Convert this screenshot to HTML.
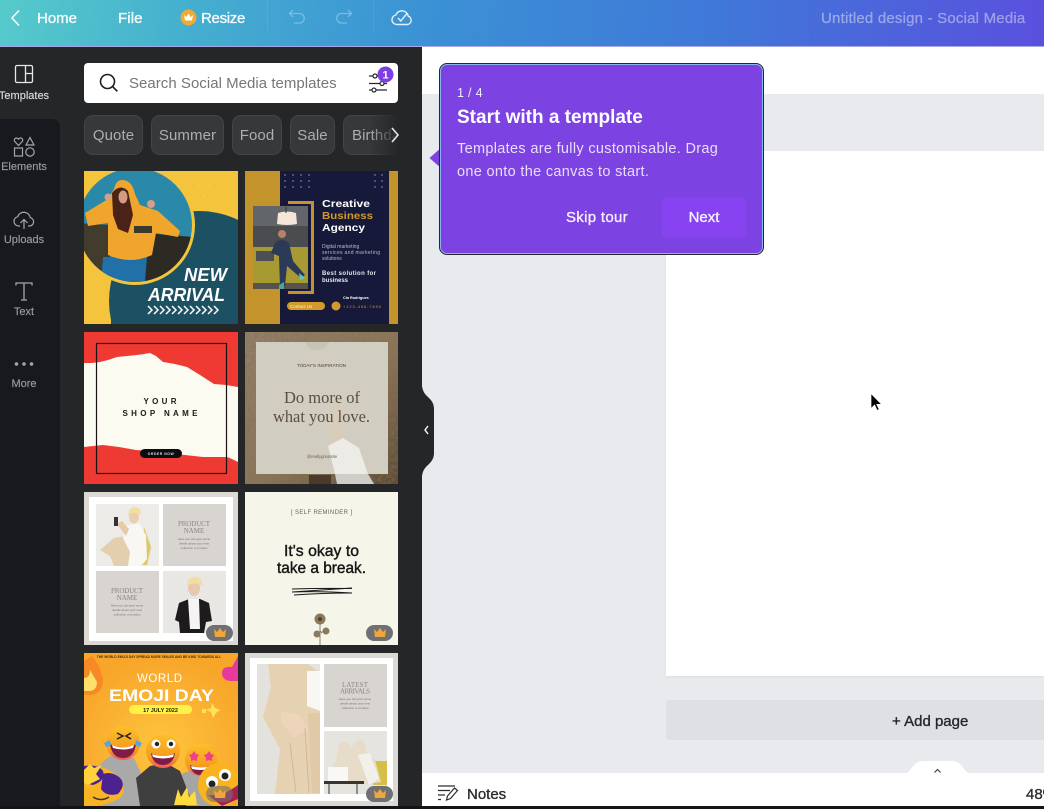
<!DOCTYPE html>
<html><head><meta charset="utf-8"><style>
*{box-sizing:border-box;margin:0;padding:0}
html,body{width:1044px;height:809px;overflow:hidden;background:#fff;font-family:"Liberation Sans",sans-serif}
.a{position:absolute;white-space:nowrap}
svg{position:absolute;overflow:hidden}
.m{font-weight:normal;-webkit-text-stroke:.35px currentColor}
.nav{color:#fff;font-size:15px;top:10px;line-height:18px;opacity:.95}
.rail{width:60px;left:-6px;text-align:center;font-size:11px;line-height:13px;color:#9a9b9d;-webkit-text-stroke:.15px currentColor}
.chip{position:absolute;top:115px;height:40px;background:#37383a;border:1px solid #434446;border-radius:9px;color:#adaeaf;font-size:15px;line-height:39px;text-align:center;letter-spacing:.1px;overflow:hidden;white-space:nowrap}
.th{filter:blur(.35px)}
text{font-family:"Liberation Sans",sans-serif}
.s{font-family:"Liberation Serif",serif}
</style></head><body>
<div class="a" style="left:0;top:0;width:1044px;height:46px;background:linear-gradient(97deg,#56cacb 0%,#45afcf 18%,#3b90d5 42%,#3f79d8 68%,#5a50de 100%)"></div>
<div class="a" style="left:0;top:46px;width:1044px;height:1px;background:#a9a8e6"></div>
<svg style="left:8px;top:8px" width="16" height="20" viewBox="0 0 16 20"><path d="M11 2.500 4 10l7 7.500" fill="none" stroke="#fff" stroke-width="1.500"/></svg>
<div class="a nav m" style="left:37px">Home</div>
<div class="a nav m" style="left:118px;letter-spacing:.1px">File</div>
<svg style="left:180px;top:9px" width="17" height="17" viewBox="0 0 17 17"><circle cx="8.500" cy="8.500" r="8" fill="#f0aa35"/><path d="M4 6l2.400 2L8.500 4.500 10.600 8 13 6l-1 5.500H5z" fill="#fff"/></svg>
<div class="a nav m" style="left:201px;letter-spacing:-.3px">Resize</div>
<div class="a" style="left:267px;top:0;width:1px;height:33px;background:rgba(255,255,255,.07)"></div>
<div class="a" style="left:373px;top:0;width:1px;height:33px;background:rgba(255,255,255,.07)"></div>
<svg style="left:287px;top:8px" width="20" height="18" viewBox="0 0 20 18"><path d="M6 2 2.500 5.500 6 9M3 5.500h9.500a4.700 4.700 0 0 1 0 9.500H7" fill="none" stroke="#8fc7e6" stroke-width="1.300" opacity=".75"/></svg>
<svg style="left:334px;top:8px" width="20" height="18" viewBox="0 0 20 18"><path d="M14 2l3.500 3.500L14 9M17 5.500H7.500a4.700 4.700 0 0 0 0 9.500H13" fill="none" stroke="#8fc7e6" stroke-width="1.300" opacity=".75"/></svg>
<svg style="left:390px;top:7px" width="24" height="20" viewBox="0 0 24 20"><path d="M6.500 17.500a4.800 4.800 0 0 1-.7-9.500 6.500 6.500 0 0 1 12.500 1.200 4.300 4.300 0 0 1-.8 8.300z" fill="none" stroke="#e6f0fa" stroke-width="1.400"/><path d="M8 11l2.800 3L17 6.500" fill="none" stroke="#e6f0fa" stroke-width="1.400"/></svg>
<div class="a m" style="left:821px;top:9.500px;font-size:15px;line-height:18px;color:rgba(255,255,255,.4);letter-spacing:.2px;-webkit-text-stroke-color:rgba(255,255,255,.25)">Untitled design - Social Media</div>

<div class="a" style="left:0;top:47px;width:422px;height:762px;background:#252627"></div>
<div class="a" style="left:0;top:119px;width:60px;height:690px;background:#18191f;border-top-right-radius:8px"></div>
<svg style="left:14px;top:64px" width="20" height="20" viewBox="0 0 20 20"><rect x="1.500" y="1.500" width="17" height="17" rx="1.500" fill="none" stroke="#e8e8e8" stroke-width="1.300"/><path d="M11.500 1.500v17M11.500 9.500h7" stroke="#e8e8e8" stroke-width="1.300"/></svg>
<div class="a rail" style="top:90px;color:#dcdcdc;font-size:11px">Templates</div>
<svg style="left:12px;top:135px" width="24" height="24" viewBox="0 0 24 24" fill="none" stroke="#a5a6a8" stroke-width="1.200"><path d="M6.500 10.500 2.800 6.500c-1.900-2.500 1.900-5 3.700-2.300 1.800-2.700 5.600-.2 3.700 2.300z"/><path d="M18 2.500l4 7.500h-8z"/><rect x="2.500" y="13" width="8" height="8"/><circle cx="18" cy="17" r="4.200"/></svg>
<div class="a rail" style="top:161px">Elements</div>
<svg style="left:12px;top:209px" width="24" height="22" viewBox="0 0 24 22" fill="none" stroke="#a5a6a8" stroke-width="1.200"><path d="M8 17H6.500a4.700 4.700 0 0 1-.8-9.300 6.500 6.500 0 0 1 12.600 1A4.200 4.200 0 0 1 17.500 17H16"/><path d="M12 20v-9M8.500 14 12 10.500l3.500 3.500"/></svg>
<div class="a rail" style="top:234px">Uploads</div>
<svg style="left:14px;top:281px" width="20" height="21" viewBox="0 0 20 21" fill="none" stroke="#a5a6a8" stroke-width="1.300"><path d="M2 4.500V2h16v2.500M10 2v17M7 19h6"/></svg>
<div class="a rail" style="top:306px">Text</div>
<svg style="left:14px;top:360px" width="20" height="8" viewBox="0 0 20 8"><circle cx="2.500" cy="4" r="1.800" fill="#a5a6a8"/><circle cx="10" cy="4" r="1.800" fill="#a5a6a8"/><circle cx="17.500" cy="4" r="1.800" fill="#a5a6a8"/></svg>
<div class="a rail" style="top:378px">More</div>

<div class="a" style="left:84px;top:63px;width:314px;height:40px;background:#fff;border-radius:4px"></div>
<svg style="left:98px;top:72px" width="22" height="22" viewBox="0 0 22 22" fill="none" stroke="#1d1e20" stroke-width="1.600"><circle cx="9.500" cy="9.500" r="7"/><path d="M14.500 14.500l4.800 4.800"/></svg>
<div class="a" style="left:129px;top:75px;font-size:15px;line-height:18px;color:#75767a;letter-spacing:.03px">Search Social Media templates</div>
<svg style="left:366px;top:66px" width="30" height="30" viewBox="0 0 30 30" fill="none" stroke="#26272a" stroke-width="1.200"><path d="M3 10h4M11 10h7M3 17.500h11M18 17.500h3M3 24h3M10 24h11"/><circle cx="9" cy="10" r="2"/><circle cx="16" cy="17.500" r="2"/><circle cx="8" cy="24" r="2"/><circle cx="19.500" cy="8.500" r="8" fill="#7d3ee6" stroke="none"/><text x="19.500" y="12.500" font-size="11" font-weight="bold" fill="#fff" stroke="none" text-anchor="middle">1</text></svg>

<div class="chip" style="left:84px;width:59px">Quote</div>
<div class="chip" style="left:151px;width:73px">Summer</div>
<div class="chip" style="left:232px;width:50px">Food</div>
<div class="chip" style="left:290px;width:45px">Sale</div>
<div class="chip" style="left:343px;width:70px;text-align:left;padding-left:8px">Birthday</div>
<div class="a" style="left:370px;top:112px;width:52px;height:46px;background:linear-gradient(90deg,rgba(37,38,39,0),#252627 55%)"></div>
<svg style="left:389px;top:126px" width="12" height="18" viewBox="0 0 12 18"><path d="M3 2l6 7-6 7" fill="none" stroke="#e8e8e8" stroke-width="1.600"/></svg>

<!-- T1 -->
<svg class="th" style="left:84px;top:171px" width="154" height="153" viewBox="0 0 154 153">
<rect width="154" height="153" fill="#f4c53c"/>
<g fill="#fbe08a" opacity=".7"><circle cx="105" cy="15" r=".6"/><circle cx="115" cy="15" r=".6"/><circle cx="125" cy="15" r=".6"/><circle cx="135" cy="15" r=".6"/><circle cx="110" cy="25" r=".6"/><circle cx="120" cy="25" r=".6"/><circle cx="130" cy="25" r=".6"/><circle cx="140" cy="25" r=".6"/></g>
<circle cx="115" cy="130" r="90" fill="#1c5063"/><rect x="27" y="130" width="127" height="23" fill="#1c5063"/>
<circle cx="51" cy="54" r="60" fill="#f4c53c"/>
<clipPath id="c1"><circle cx="51" cy="54" r="57"/></clipPath>
<g clip-path="url(#c1)"><rect x="-10" y="-5" width="125" height="120" fill="#2a89a8"/><path d="M-10 52 26 54v60H-10z" fill="#413c2c"/><path d="M60 62l50 4v50H60z" fill="#2c2a22"/><path d="M19 86h44l-2 25H17z" fill="#2170a8"/><path d="M1 42 24 28 30 18q2-9 8-9 10 0 13 14l5 11 18 6 22 20-2 6-22-4-4 22q-22 10-44 0L24 52 4 55z" fill="#f0a62c"/><path d="M28 22q8-10 16-2l5 24-5 18-10-4-5-14z" fill="#4a2218"/><ellipse cx="39" cy="26" rx="4.500" ry="6.500" fill="#d49a82"/><circle cx="24" cy="26" r="3.500" fill="#d4a088"/><circle cx="67" cy="33" r="4" fill="#d4a088"/><rect x="50" y="55" width="18" height="7" fill="#3a3a2a"/></g>
<text x="143" y="110" font-size="18.500" font-weight="bold" font-style="italic" fill="#fff" text-anchor="end" textLength="43" lengthAdjust="spacingAndGlyphs">NEW</text>
<text x="141" y="130" font-size="18.500" font-weight="bold" font-style="italic" fill="#fff" text-anchor="end" textLength="77" lengthAdjust="spacingAndGlyphs">ARRIVAL</text>
<path d="M64 135l4 4-4 4M70 135l4 4-4 4M76 135l4 4-4 4M82 135l4 4-4 4M88 135l4 4-4 4M94 135l4 4-4 4M100 135l4 4-4 4M106 135l4 4-4 4M112 135l4 4-4 4M118 135l4 4-4 4M124 135l4 4-4 4M130 135l4 4-4 4" fill="none" stroke="#fff" stroke-width="1.500"/>
</svg>
<!-- T2 -->
<svg class="th" style="left:245px;top:171px" width="153" height="153" viewBox="0 0 153 153">
<rect width="153" height="153" fill="#17193a"/><rect width="35" height="153" fill="#c4942c"/><rect x="144" width="9" height="153" fill="#c4942c"/>
<path d="M43 31.500h24.500v90H43" fill="none" stroke="#c4942c" stroke-width="3"/>
<rect x="8" y="35" width="55" height="83" fill="#4a4c50"/><rect x="8" y="35" width="55" height="20" fill="#62656a"/><rect x="8" y="76" width="55" height="36" fill="#a89a32"/><rect x="8" y="112" width="55" height="6" fill="#55534c"/><rect x="11" y="80" width="18" height="10" fill="#4e5058"/>
<path d="M30 72q6-6 14 0l4 18 12 14-4 3-14-12-2 20h-5l-1-30-8-3z" fill="#2b3a56"/><circle cx="37" cy="63" r="4" fill="#b88268"/><path d="M54 102l6 5-5 2z" fill="#64c3c0"/><path d="M34 114l5-3v7h-5z" fill="#3fa8a0"/>
<path d="M33 42q9-3 18 0l1 11q-10 2-20 0z" fill="#f4e6d8"/><path d="M41 36v6" stroke="#333"/>
<text x="77" y="36" font-size="10.500" font-weight="bold" fill="#fff" textLength="48" lengthAdjust="spacingAndGlyphs">Creative</text>
<text x="77" y="48" font-size="10.500" font-weight="bold" fill="#d09b2a" textLength="51" lengthAdjust="spacingAndGlyphs">Business</text>
<text x="77" y="60" font-size="10.500" font-weight="bold" fill="#fff" textLength="43" lengthAdjust="spacingAndGlyphs">Agency</text>
<text x="77" y="77" font-size="5" fill="#b9bccb">Digital marketing</text><text x="77" y="83" font-size="5" fill="#b9bccb" textLength="58">services and marketing</text><text x="77" y="89" font-size="5" fill="#b9bccb">solutions</text>
<text x="77" y="104" font-size="6" font-weight="bold" fill="#e8e8ee" textLength="54">Best solution for</text><text x="77" y="111" font-size="6" font-weight="bold" fill="#e8e8ee">business</text>
<rect x="42" y="131" width="38" height="8" rx="4" fill="#d09b2a"/><text x="45" y="137" font-size="4.500" fill="#fff3c8">Contact Us</text>
<circle cx="91" cy="135" r="4.500" fill="#d09b2a"/><text x="98" y="128" font-size="3.800" fill="#fff" font-weight="bold">Cia Rodrigues</text><text x="98" y="137" font-size="4" fill="#d09b2a" textLength="38">+123-456-7890</text>
<g fill="#a6a8c0"><circle cx="40" cy="4" r=".7"/><circle cx="48" cy="4" r=".7"/><circle cx="56" cy="4" r=".7"/><circle cx="64" cy="4" r=".7"/><circle cx="40" cy="10" r=".7"/><circle cx="48" cy="10" r=".7"/><circle cx="56" cy="10" r=".7"/><circle cx="64" cy="10" r=".7"/><circle cx="40" cy="16" r=".7"/><circle cx="48" cy="16" r=".7"/><circle cx="56" cy="16" r=".7"/><circle cx="64" cy="16" r=".7"/><circle cx="130" cy="4" r=".7"/><circle cx="137" cy="4" r=".7"/><circle cx="130" cy="10" r=".7"/><circle cx="137" cy="10" r=".7"/><circle cx="130" cy="16" r=".7"/><circle cx="137" cy="16" r=".7"/></g>
</svg>
<!-- T3 -->
<svg class="th" style="left:84px;top:332px" width="154" height="152" viewBox="0 0 154 152">
<rect width="154" height="152" fill="#ef3a33"/>
<path d="M0 31l8 0 8-1 8-2 9-3 10-1 10-1 7-1 6-1 6 3 7 6 12 2 12 3 13 8 14 9 12 1 12 2v75l-6-3-5-2-12 0-12 0-18-2-19-2-15-2-15-1-17-3-16-2-10 1-9 1z" fill="#fbfbf1"/>
<rect x="12.500" y="11.500" width="130" height="130" fill="none" stroke="#1b1012" stroke-width="1.200"/>
<text x="76" y="72" font-size="8" font-weight="bold" fill="#1a1a1a" text-anchor="middle" textLength="33">YOUR</text>
<text x="76" y="84" font-size="8" font-weight="bold" fill="#1a1a1a" text-anchor="middle" textLength="75">SHOP NAME</text>
<rect x="56" y="117" width="42" height="9" rx="4.500" fill="#0c0c0e"/><text x="77" y="123" font-size="3.500" font-weight="bold" fill="#ddd" text-anchor="middle" letter-spacing=".5">ORDER NOW</text>
</svg>
<!-- T4 -->
<svg class="th" style="left:245px;top:332px" width="153" height="152" viewBox="0 0 153 152">
<defs><linearGradient id="g4" x1="0" y1="0" x2="1" y2="1"><stop offset="0" stop-color="#938068"/><stop offset=".55" stop-color="#8c7558"/><stop offset="1" stop-color="#5d4a34"/></linearGradient><filter id="n4" x="0" y="0" width="100%" height="100%"><feTurbulence type="fractalNoise" baseFrequency=".3" numOctaves="2" seed="4"/><feColorMatrix values="0 0 0 0 .22 0 0 0 0 .16 0 0 0 0 .1 1.200 0 0 0 -.4"/></filter></defs>
<rect width="153" height="152" fill="url(#g4)"/><rect width="153" height="152" filter="url(#n4)"/>
<rect x="11" y="10" width="132" height="132" fill="#d2cdc1"/>
<path d="M60 10q4 8 12 8t12-8z" fill="#c9c3b5"/><path d="M89 72q8-3 11 6l-2 34-13 2q-2-25 4-42z" fill="#d8ccba"/>
<path d="M83 114l15-8 16 10 9 26H90z" fill="#edebe6"/><path d="M90 142h33l6 10H92z" fill="#cfcdc8"/><rect x="64" y="143" width="22" height="9" fill="#4a3a2c"/>
<text x="76.500" y="35" font-size="4.500" fill="#4a4238" text-anchor="middle" textLength="49">TODAY'S INSPIRATION</text>
<text class="s" x="77" y="71" font-size="17" fill="#5a4d42" text-anchor="middle" textLength="76" lengthAdjust="spacingAndGlyphs">Do more of</text>
<text class="s" x="76.500" y="90" font-size="17" fill="#5a4d42" text-anchor="middle" textLength="97" lengthAdjust="spacingAndGlyphs">what you love.</text>
<text x="77" y="126" font-size="4.200" fill="#6a6258" text-anchor="middle">@reallygreatsite</text>
</svg>
<!-- T5 -->
<svg class="th" style="left:84px;top:492px" width="154" height="153" viewBox="0 0 154 153">
<rect width="154" height="153" fill="#dcd8d4"/><rect x="5" y="5" width="144" height="144" fill="#fff"/>
<rect x="12" y="12" width="63" height="62" fill="#ecebe7"/><rect x="79" y="12" width="63" height="62" fill="#d8d5d1"/><rect x="12" y="79" width="63" height="62" fill="#d8d5d1"/><rect x="79" y="79" width="63" height="62" fill="#e8e7e3"/>
<path d="M60 35l7 20-4 18h-5z" fill="#dcc96c"/><path d="M16 58l14-12 12-2 12 4 2 10-8 16H30l-4-10z" fill="#e3cfae"/><path d="M42 34l13-3 7 12 1 24-6 7H44l2-14-7-14z" fill="#f8f7f3"/><path d="M33 32l5-3 7 8-3 7z" fill="#e8c9a8"/><ellipse cx="50" cy="25" rx="5" ry="6.500" fill="#ebcdb0"/><path d="M44 23q1-8 7-8t6 8q-6-4-13 0z" fill="#f0dfa0"/><rect x="30" y="25" width="4" height="9" fill="#333"/>
<text class="s" x="110" y="34" font-size="7" fill="#8a8680" text-anchor="middle" textLength="32">PRODUCT</text><text class="s" x="110" y="41" font-size="7" fill="#8a8680" text-anchor="middle">NAME</text>
<text x="110" y="48" font-size="3" fill="#77736e" text-anchor="middle">Here you can give some</text><text x="110" y="52.500" font-size="3" fill="#77736e" text-anchor="middle">details about your new</text><text x="110" y="57" font-size="3" fill="#77736e" text-anchor="middle">collection or product</text>
<text class="s" x="43" y="101" font-size="7" fill="#8a8680" text-anchor="middle" textLength="32">PRODUCT</text><text class="s" x="43" y="108" font-size="7" fill="#8a8680" text-anchor="middle">NAME</text>
<text x="43" y="114.500" font-size="3" fill="#77736e" text-anchor="middle">Here you can give some</text><text x="43" y="119" font-size="3" fill="#77736e" text-anchor="middle">details about your new</text><text x="43" y="123.500" font-size="3" fill="#77736e" text-anchor="middle">collection or product</text>
<path d="M91 128l4-17 10-4h11l9 4 3 18-6 1-2 11H96l-1-11z" fill="#1d1b1c"/><path d="M104 107h11l1 30h-10z" fill="#f6f4f2"/><ellipse cx="110" cy="96" rx="6" ry="8" fill="#e8c8ae"/><path d="M103 94q0-9 8-9t7 9q-7-5-15 0z" fill="#f0dfa0"/>
<rect x="122" y="133" width="27" height="16" rx="8" fill="#6f7072"/><path d="M130 137l3 3 3-4 3 4 3-3-1 8h-10z" fill="#efa63a"/>
</svg>
<!-- T6 -->
<svg class="th" style="left:245px;top:492px" width="153" height="153" viewBox="0 0 153 153">
<rect width="153" height="153" fill="#f5f5e9"/>
<text x="76.500" y="22" font-size="6" fill="#666" text-anchor="middle" textLength="61">[ SELF REMINDER ]</text>
<text x="76.500" y="64" font-size="16" fill="#151515" stroke="#151515" stroke-width=".4" text-anchor="middle" textLength="75" lengthAdjust="spacingAndGlyphs">It's okay to</text>
<text x="76.500" y="81" font-size="16" fill="#151515" stroke="#151515" stroke-width=".4" text-anchor="middle" textLength="89" lengthAdjust="spacingAndGlyphs">take a break.</text>
<path d="M47 97q30-1 60-.5M107 96q-30 2-60 4M47 100q30-1 60 1M49 103q28-2 58-2" stroke="#1a1a1a" stroke-width="1" fill="none"/>
<path d="M75 130v23M73 143l3-4M80 138l-4 3" stroke="#75674f" stroke-width=".8"/><g fill="#8b7a5c"><circle cx="75" cy="127" r="5.500"/><circle cx="72" cy="142" r="3.500"/><circle cx="81" cy="139" r="3.500"/></g><circle cx="75" cy="127" r="2" fill="#4e432f"/>
<rect x="121" y="133" width="27" height="16" rx="8" fill="#6f7072"/><path d="M129 137l3 3 3-4 3 4 3-3-1 8h-10z" fill="#efa63a"/>
</svg>
<!-- T7 -->
<svg class="th" style="left:84px;top:653px" width="154" height="153" viewBox="0 0 154 153">
<defs><radialGradient id="g7" cx=".5" cy=".62" r=".6"><stop offset="0" stop-color="#fdc53e"/><stop offset="1" stop-color="#f8a62a"/></radialGradient><linearGradient id="e7" x1="0" y1="0" x2="0" y2="1"><stop offset="0" stop-color="#fcc028"/><stop offset=".7" stop-color="#f59a20"/><stop offset="1" stop-color="#ef5a62"/></linearGradient></defs>
<rect width="154" height="153" fill="url(#g7)"/>
<text x="75" y="5" font-size="3.300" font-weight="bold" fill="#4a3208" text-anchor="middle">THE WORLD EMOJI DAY SPREAD MORE SMILES AND BE KIND TOWARDS ALL</text>
<path d="M0 8l8-5 7 10 4 13q0 12-8 15-6 2-11 0z" fill="#f78a26"/><path d="M0 25q6 0 6-8l7 12q0 8-7 9H0z" fill="#fde16b"/><path d="M154 3l-6 11q-10-1-10 6 0 7 8 8h8z" fill="#e8399c"/>
<text x="75.500" y="29" font-size="11.500" fill="#fff" text-anchor="middle" textLength="45">WORLD</text>
<text x="77.500" y="48" font-size="16.500" font-weight="bold" fill="#fff" text-anchor="middle" textLength="105" lengthAdjust="spacingAndGlyphs">EMOJI DAY</text>
<rect x="45" y="52" width="63" height="9" rx="4.500" fill="#fff146"/><text x="76.500" y="59" font-size="5.500" font-weight="bold" fill="#282408" text-anchor="middle">17 JULY 2022</text>
<path d="M128 50l3 5 5 2-4 3-3 5-2-6-5-2 5-2z" fill="#fee35a"/><rect x="118" y="56" width="4" height="4" fill="#fee35a"/>
<path d="M12 115l14-12 24 2 12 26-4 22H15z" fill="#a9a9a9"/><path d="M95 122l20-8 20 5v34H100z" fill="#a5a5a5"/><path d="M52 125l14-12 16-3 14 8 10 26-4 9H56z" fill="#3f3f40"/>
<circle cx="39" cy="90" r="17" fill="url(#e7)"/><circle cx="79" cy="98" r="17" fill="url(#e7)"/><circle cx="117" cy="107" r="16" fill="url(#e7)"/>
<path d="M26 91q13 7 26 0-2 14-13 14t-13-14z" fill="#7d1c46"/><path d="M28 92q11 5 22 0l-1 3q-10 3-20 0z" fill="#fff"/><path d="M67 100q12 6 24 0-2 12-12 12t-12-12z" fill="#7d1c46"/><path d="M68 101q11 4 22 0l-1 3q-10 3-20 0z" fill="#fff"/><path d="M106 112q11 5 22 0-2 10-11 10t-11-10z" fill="#7d1c46"/><path d="M107 113q10 3 20 0l-1 3q-9 2-18 0z" fill="#fff"/>
<path d="M33 80l6 3-6 3M47 80l-5 3 5 3" stroke="#222" stroke-width="1.500" fill="none"/><path d="M26 87l-6 3 2 4 5-2zM52 87l6 3-2 4-5-2z" fill="#4fa6e8"/><circle cx="72" cy="91" r="4.500" fill="#fff"/><circle cx="87" cy="91" r="4.500" fill="#fff"/><circle cx="73" cy="91" r="2.200" fill="#222"/><circle cx="87" cy="91" r="2.200" fill="#222"/>
<path d="M110 98l2 3 3 1-2 3v3l-3-1-3 1v-3l-2-3 3-1zM125 98l2 3 3 1-2 3v3l-3-1-3 1v-3l-2-3 3-1z" fill="#ef3f8d"/>
<path d="M0 113q20-2 34 10 10 14 2 22-18 10-36 8z" fill="#f9b424"/><path d="M0 113q14-2 19 5 3 10-10 14l-9-2zM19 121q8-3 16 3 8 7-1 17-12 3-17-5z" fill="#4b2391"/><path d="M9 144q8 5 16 0" stroke="#333" fill="none" stroke-width="1.500"/>
<circle cx="136" cy="132" r="22" fill="#f9b31f"/><circle cx="128" cy="129" r="6" fill="#fff"/><circle cx="141" cy="122" r="6" fill="#fff"/><circle cx="128" cy="131" r="3.500" fill="#222"/><circle cx="141" cy="123" r="3.500" fill="#222"/><path d="M124 142q14 2 30-10v14l-16 7z" fill="#a81e50"/>
<path d="M90 152l4-16 3 8 6-10 2 10 6-6 2 14z" fill="#fddb3f"/><path d="M0 117l6-6 4 4 8-3-6 9 4 5-12 6-4-2z" fill="#ffd33a"/>
<rect x="122" y="133" width="27" height="16" rx="8" fill="#6f7072" opacity=".6"/><path d="M130 137l3 3 3-4 3 4 3-3-1 8h-10z" fill="#efa63a"/>
</svg>
<!-- T8 -->
<svg class="th" style="left:245px;top:653px" width="153" height="153" viewBox="0 0 153 153">
<rect width="153" height="153" fill="#dcd8d4"/><rect x="5" y="5" width="143" height="143" fill="#fff"/>
<rect x="12" y="11" width="63" height="130" fill="#e4e2dc"/><rect x="79" y="11" width="63" height="63" fill="#d8d5d1"/><rect x="79" y="78" width="63" height="63" fill="#e6e4df"/>
<path d="M23 11h40l12 9v121H30l5-45-17-32 8-30z" fill="#e5d2b2"/><path d="M62 18h13v40l-13-5z" fill="#f8f7f3"/><path d="M36 58l18 4 10 14-14 8-14-14z" fill="#eed4ba"/><path d="M45 90l6 50M60 75l4 65" stroke="#cfb894"/><path d="M75 60l-12 0 4 80h8z" fill="#dfc9a6"/>
<text class="s" x="110" y="34" font-size="7" fill="#8a8680" text-anchor="middle" textLength="26">LATEST</text><text class="s" x="110" y="40.500" font-size="7" fill="#8a8680" text-anchor="middle" textLength="30">ARRIVALS</text>
<text x="110" y="47" font-size="3" fill="#77736e" text-anchor="middle">Here you can give some</text><text x="110" y="51.500" font-size="3" fill="#77736e" text-anchor="middle">details about your new</text><text x="110" y="56" font-size="3" fill="#77736e" text-anchor="middle">collection or product</text>
<path d="M128 108h14v24h-14z" fill="#d5bf48"/><path d="M83 122l8-14 3-16q4-7 9-2l3 6 4-7q7-5 10 2l2 10 8 6 6 22-12 2H90z" fill="#e7dcc8"/><path d="M113 102l12-2 9 26-10 6z" fill="#f2f0ea"/><rect x="83" y="114" width="20" height="14" fill="#f8f8f6"/><rect x="79" y="128" width="40" height="3" fill="#3b342c"/><path d="M84 131v10M112 131v10" stroke="#333"/>
<rect x="121" y="133" width="27" height="16" rx="8" fill="#6f7072"/><path d="M129 137l3 3 3-4 3 4 3-3-1 8h-10z" fill="#efa63a"/>
</svg>

<!-- canvas -->
<div class="a" style="left:422px;top:94px;width:622px;height:679px;background:#e9eaee"></div>
<div class="a" style="left:666px;top:151px;width:378px;height:525px;background:#fff;box-shadow:0 1px 3px rgba(0,0,0,.06)"></div>
<div class="a" style="left:666px;top:700px;width:378px;height:40px;background:#dee0e4;border-radius:4px 0 0 4px"></div>
<div class="a m" style="left:892px;top:712.500px;font-size:15px;line-height:18px;color:#25272b">+ Add page</div>
<div class="a" style="left:0;top:806px;width:1044px;height:3px;background:#141416"></div>
<div class="a" style="left:422px;top:773px;width:622px;height:33px;background:#fff"></div>
<svg style="left:896px;top:760px" width="85" height="14" viewBox="0 0 85 14"><path d="M2 14c8 0 10-1 14-6.500C19 3.500 22 1 27 1h29c5 0 8 2.500 11 6.500C71 13 73 14 81 14z" fill="#fff"/><path d="M38.500 12.500l3-3 3 3" fill="none" stroke="#444" stroke-width="1.200"/></svg>
<svg style="left:437px;top:784px" width="22" height="20" viewBox="0 0 22 20" fill="none" stroke="#2b2c30" stroke-width="1.200"><path d="M1 2h17M1 6.500h12M1 11h7M1 15.500h3"/><path d="M9.500 16l1-4 7-8 3 2.500-7 8z"/></svg>
<div class="a m" style="left:467px;top:786px;font-size:15px;line-height:18px;color:#2b2c30">Notes</div>
<div class="a m" style="left:1026px;top:786px;font-size:15px;line-height:18px;color:#2b2c30">48%</div>

<!-- handle -->
<svg style="left:422px;top:386px" width="14" height="90" viewBox="0 0 14 90"><path d="M0 0c1 7 4 9 7 12 3 3 5 6 5 11v44c0 5-2 8-5 11-3 3-6 5-7 12z" fill="#252627"/><path d="M6 40l-3 4 3 4" fill="none" stroke="#fff" stroke-width="1.400"/></svg>

<!-- tooltip -->
<svg style="left:428px;top:146px" width="14" height="24" viewBox="0 0 14 24"><path d="M14 1 1.500 12 14 23z" fill="#7d43e2"/></svg>
<div class="a" style="left:439px;top:63px;width:325px;height:192px;background:#8ab4f2;border:1px solid #26272b;border-radius:8px;padding:1px"><div style="width:100%;height:100%;background:#7d43e2;border-radius:6px"></div></div>
<div class="a" style="left:457px;top:86px;font-size:12.500px;line-height:15px;color:#f3ecff;letter-spacing:.3px">1 / 4</div>
<div class="a" style="left:457px;top:106px;font-size:19px;line-height:23px;font-weight:bold;color:#fff">Start with a template</div>
<div class="a" style="left:457px;top:138px;font-size:14.500px;line-height:23px;color:#e9defa;letter-spacing:.32px">Templates are fully customisable. Drag<br>one onto the canvas to start.</div>
<div class="a m" style="left:566px;top:209px;font-size:15px;line-height:18px;color:#f6f0ff;letter-spacing:.3px">Skip tour</div>
<div class="a m" style="left:662px;top:197px;width:84px;height:40px;background:#8743ef;border-radius:4px;color:#f6f0ff;font-size:15px;line-height:41px;text-align:center">Next</div>

<svg style="left:868px;top:391px" width="16" height="22" viewBox="0 0 16 22"><path d="M3 2.500v15l3.600-3.500 2.600 5.500 2-1-2.500-5.200h4.800z" fill="#000" stroke="#fff" stroke-width=".7"/></svg>
</body></html>
